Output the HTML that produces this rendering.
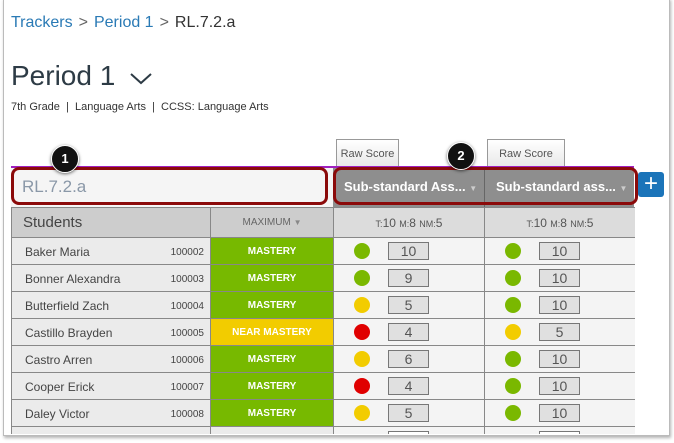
<!DOCTYPE html>
<html><head><style>
*{margin:0;padding:0;box-sizing:border-box}
body{width:674px;height:443px;background:#fff;position:relative;overflow:hidden;font-family:"Liberation Sans",sans-serif}
.frame{position:absolute;left:3px;top:-2px;width:667px;height:438px;border:1px solid #bbb;box-shadow:1px 2px 3px rgba(0,0,0,.3);background:#fff}
.a{position:absolute}
.bc{left:11px;top:14px;font-size:16px;color:#333}
.bc a{color:#2a7ab5;text-decoration:none}
.bc span.s{color:#666;margin:0 6px}
.t{left:11px;top:60px;font-size:28px;color:#2d3b45}
.sub{left:11px;top:101px;font-size:11px;color:#333}
.raw{height:30px;width:63px;border:1px solid #999;border-bottom:none;background:linear-gradient(#fff,#e6e6e6);font-size:11px;color:#555;text-align:center;line-height:28px}
.circ{position:absolute;width:28px;height:28px;border-radius:50%;background:#111;color:#fff;font-weight:bold;font-size:13px;text-align:center;line-height:26px;border:1.5px solid #fff;box-shadow:0 1px 3px rgba(0,0,0,.6)}
.wrap{position:absolute;left:11px;top:207px;width:624px;height:227px;overflow:hidden}
table{border-collapse:collapse;table-layout:fixed;width:624px}
td{border:1px solid #888;height:27px;padding:0;position:relative;background:#f4f4f4}
tr.h td{height:30px;background:#dcdcdc;text-align:center;font-size:12px;color:#555}
td.n{background:#ebebeb}
td.n .nm{position:absolute;left:13px;top:7px;font-size:12px;color:#444}
td.n .id{position:absolute;right:6px;top:9px;font-size:10px;color:#444}
td.m{color:#fff;font-weight:bold;font-size:10px;text-align:center;background:#77b900}
td.nm2{background:#f2cc00}
.dot{position:absolute;left:20px;top:5px;width:16px;height:16px;border-radius:50%}
.box{position:absolute;left:54px;top:4px;width:41px;height:18px;border:1px solid #777;background:#e0e0e0;font-size:14px;color:#555;text-align:center;line-height:16px}
small{font-size:9px}
</style></head><body>
<div class="frame"></div>
<div class="a bc"><a>Trackers</a><span class="s">&gt;</span><a>Period 1</a><span class="s">&gt;</span>RL.7.2.a</div>
<div class="a t">Period 1 <svg width="24" height="14" style="margin-left:6px" viewBox="0 0 24 14"><path d="M2 3 L12 12 L22 3" stroke="#2d3b45" stroke-width="2" fill="none"/></svg></div>
<div class="a sub">7th Grade &nbsp;|&nbsp; Language Arts &nbsp;|&nbsp; CCSS: Language Arts</div>
<div class="a raw" style="left:336px;top:139px">Raw Score</div>
<div class="a raw" style="left:487px;top:139px;width:78px">Raw Score</div>
<div class="a" style="left:11px;top:166px;width:623px;height:2px;background:#a020c0"></div>
<div class="a" style="left:11px;top:168px;width:322px;height:39px;background:#f5f5f5"></div>
<div class="a" style="left:333px;top:168px;width:301px;height:39px;background:#8e8e8e"></div>
<div class="a" style="left:484px;top:168px;width:1px;height:39px;background:#666"></div>
<div class="a" style="left:344px;top:179px;font-size:13px;font-weight:bold;color:#fff">Sub-standard Ass... <span style="font-size:8px;color:#ccc">▼</span></div>
<div class="a" style="left:496px;top:179px;font-size:13px;font-weight:bold;color:#fff">Sub-standard ass... <span style="font-size:8px;color:#ccc">▼</span></div>
<div class="a" style="left:22px;top:177px;font-size:17px;color:#8a98a8">RL.7.2.a</div>
<div class="a" style="left:11px;top:167px;width:317px;height:38px;border:3px solid #8b0a0a;border-radius:8px"></div>
<div class="a" style="left:333px;top:167px;width:305px;height:38px;border:3px solid #8b0a0a;border-radius:8px"></div>
<div class="a" style="left:638px;top:172px;width:26px;height:25px;background:#1b74b9;border-radius:3px;color:#fff;font-size:24px;line-height:23px;text-align:center">+</div>
<div class="circ" style="left:51px;top:145px">1</div>
<div class="circ" style="left:447px;top:142px">2</div>
<div class="wrap"><table>
<colgroup><col style="width:199px"><col style="width:123px"><col style="width:151px"><col style="width:151px"></colgroup>
<tr class="h"><td style="background:#cdcdcd;text-align:left;font-size:15px;color:#444;padding-left:11px">Students</td><td style="background:#cdcdcd;font-size:10px;color:#666">MAXIMUM <span style="font-size:8px;color:#888">▼</span></td><td><small>T:</small>10 <small>M:</small>8 <small>NM:</small>5</td><td><small>T:</small>10 <small>M:</small>8 <small>NM:</small>5</td></tr>
<tbody id="rows"></tbody></table></div>
<script>
var d=[["Baker Maria","100002","M","#7ab800","10","#7ab800","10"],["Bonner Alexandra","100003","M","#7ab800","9","#7ab800","10"],["Butterfield Zach","100004","M","#f2cc00","5","#7ab800","10"],["Castillo Brayden","100005","N","#e00000","4","#f2cc00","5"],["Castro Arren","100006","M","#f2cc00","6","#7ab800","10"],["Cooper Erick","100007","M","#e00000","4","#7ab800","10"],["Daley Victor","100008","M","#f2cc00","5","#7ab800","10"],["","","E","","","",""]];
var h="";
d.forEach(function(r){
h+='<tr><td class="n">'+(r[0]?'<span class="nm">'+r[0]+'</span><span class="id">'+r[1]+'</span>':'')+'</td>';
h+='<td class="m'+(r[2]=="N"?" nm2":"")+'"'+(r[2]=="E"?' style="background:#ebebeb"':'')+'>'+(r[2]=="M"?"MASTERY":r[2]=="N"?"NEAR MASTERY":"")+'</td>';
if(r[3])h+='<td><div class="dot" style="background:'+r[3]+'"></div><div class="box">'+r[4]+'</div></td><td><div class="dot" style="background:'+r[5]+'"></div><div class="box">'+r[6]+'</div></td></tr>';
else h+='<td><div class="box" style="background:#fff"></div></td><td><div class="box" style="background:#fff"></div></td></tr>';
});
document.getElementById("rows").innerHTML=h;
</script>
</body></html>
